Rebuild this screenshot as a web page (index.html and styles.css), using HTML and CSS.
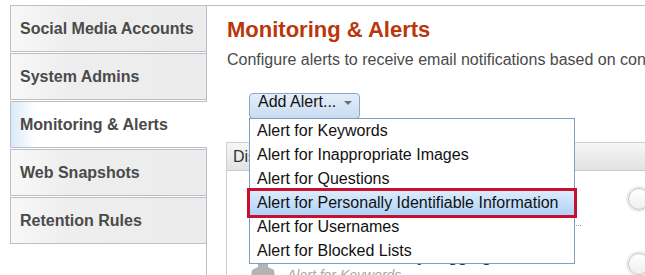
FILE: index.html
```html
<!DOCTYPE html>
<html lang="en">
<head>
<meta charset="utf-8">
<title>Monitoring &amp; Alerts</title>
<link rel="stylesheet" href="styles.css">
</head>
<body>
<div class="page">
  <nav class="nav">
    <div class="tab">Social Media Accounts</div>
    <div class="tab">System Admins</div>
    <div class="tab tab-active">Monitoring &amp; Alerts</div>
    <div class="tab">Web Snapshots</div>
    <div class="tab">Retention Rules</div>
  </nav>
  <main class="content">
    <h1 class="title">Monitoring &amp; Alerts</h1>
    <p class="desc">Configure alerts to receive email notifications based on content posted by students.</p>
    <div class="add-wrap">
      <button class="add-btn" type="button"><span>Add Alert...</span><span class="caret"></span></button>
      <ul class="menu">
        <li class="menu-item">Alert for Keywords</li>
        <li class="menu-item">Alert for Inappropriate Images</li>
        <li class="menu-item">Alert for Questions</li>
        <li class="menu-item menu-item-active">Alert for Personally Identifiable Information</li>
        <li class="menu-item">Alert for Usernames</li>
        <li class="menu-item">Alert for Blocked Lists</li>
      </ul>
    </div>
    <section class="panel">
      <div class="panel-head">Display Name</div>
      <div class="row">
        <div class="row-main">
          <svg class="user-icon" width="24" height="32" viewBox="0 0 24 32"><circle cx="12" cy="9" r="7" fill="#b3b3b3"/><rect x="7" y="14" width="10" height="9" fill="#b3b3b3"/><path d="M7 22 L17 22 L23 25 L24 32 L0 32 L1 25 Z" fill="#b3b3b3"/></svg>
          <div class="row-text">
            <div class="row-title">Main Word Rule</div>
            <div class="row-sub">Alert for Images</div>
          </div>
        </div>
        <span class="knob"></span>
      </div>
      <div class="row row-tall">
        <div class="row-main">
          <svg class="user-icon" width="24" height="32" viewBox="0 0 24 32"><circle cx="12" cy="9" r="7" fill="#b3b3b3"/><rect x="7" y="14" width="10" height="9" fill="#b3b3b3"/><path d="M7 22 L17 22 L23 25 L24 32 L0 32 L1 25 Z" fill="#b3b3b3"/></svg>
          <div class="row-text">
            <div class="row-title">Main Alert Rule by Tagging</div>
            <div class="row-sub">Alert for Keywords</div>
          </div>
        </div>
        <span class="knob"></span>
      </div>
    </section>
  </main>
</div>
</body>
</html>
```

FILE: styles.css
```css
html, body {
  margin: 0;
  padding: 0;
  background: #ffffff;
  overflow: hidden;
}

body {
  font-family: "Liberation Sans", Arial, sans-serif;
  color: #333333;
}

.page {
  display: flex;
  padding: 5px 0 0 10px;
  height: 270px;
}

.nav {
  width: 196px;
  flex: none;
  display: flex;
  flex-direction: column;
}

.tab {
  box-sizing: border-box;
  height: 47px;
  margin-bottom: 1px;
  border: 1px solid #bcbfc8;
  border-right: none;
  background: linear-gradient(to right, #f8f8f8, #eeeeee 30%, #ececec);
  display: flex;
  align-items: center;
  padding-left: 9px;
  font-size: 16px;
  font-weight: bold;
  color: #4a4a4a;
  white-space: nowrap;
}

.tab-active {
  position: relative;
  margin-right: -1px;
  background: linear-gradient(to right, #dbe9f8, #ffffff 24px);
}

.content {
  flex: 1;
  min-width: 0;
  border-top: 1px solid #bcbfc8;
  border-left: 1px solid #bcbfc8;
  padding-left: 20px;
}

.title {
  margin: 11px 0 0;
  font-size: 22px;
  line-height: 26px;
  font-weight: bold;
  color: #b9370b;
}

.desc {
  margin: 8px 0 0;
  font-size: 16px;
  line-height: 18px;
  color: #4a4a4a;
  white-space: nowrap;
}

.add-wrap {
  position: relative;
  margin: 24px 0 0 22px;
  height: 26px;
}

.add-btn {
  box-sizing: border-box;
  height: 26px;
  display: inline-flex;
  align-items: flex-start;
  padding: 0 7px 0 8px;
  border: 1px solid #8ba7c7;
  border-radius: 4px;
  background: linear-gradient(#e4eefa, #c9dcf1);
  font-family: inherit;
  font-size: 16px;
  line-height: 16px;
  color: #111111;
}

.caret {
  width: 0;
  height: 0;
  margin: 7px 0 0 8px;
  border-left: 4px solid transparent;
  border-right: 4px solid transparent;
  border-top: 4px solid #6b6f75;
}

.menu {
  position: absolute;
  z-index: 2;
  top: 25px;
  left: 0;
  box-sizing: border-box;
  width: 326px;
  margin: 0;
  padding: 0;
  list-style: none;
  border: 1px solid #7f9ec2;
  background: #ffffff;
}

.menu-item {
  padding: 0 7px;
  font-size: 16px;
  line-height: 24px;
  color: #111111;
  white-space: nowrap;
}

.menu-item-active {
  background: linear-gradient(#dcecfd, #aed2f7);
  outline: 3px solid #c8102e;
}

.panel {
  margin: 23px -60px 0 -1px;
  border-top: 1px solid #cfcfcf;
  border-left: 1px solid #cfcfcf;
}

.panel-head {
  height: 27px;
  line-height: 27px;
  padding-left: 6px;
  border-bottom: 1px solid #cbcbcb;
  background: linear-gradient(#f6f6f6, #e2e2e2);
  font-size: 16px;
  color: #333333;
}

.row {
  display: flex;
  align-items: center;
  padding-left: 23px;
}

.row-main {
  box-sizing: border-box;
  width: 331px;
  height: 55px;
  display: flex;
  align-items: flex-start;
  border-bottom: 1px dotted #9aa4ae;
}

.row-tall .row-main {
  height: 76px;
  border-bottom: none;
}

.user-icon {
  flex: none;
  margin: 12px 12px 0 1px;
}

.row-tall .user-icon {
  margin-top: 19px;
}

.row-text {
  padding-top: 6px;
}

.row-tall .row-text {
  padding-top: 21px;
}

.row-title {
  font-size: 16px;
  line-height: 20px;
  font-weight: bold;
  color: #333333;
  white-space: nowrap;
}

.row-sub {
  font-size: 14px;
  line-height: 16px;
  font-style: italic;
  color: #a8a8a8;
  white-space: nowrap;
}

.knob {
  flex: none;
  box-sizing: border-box;
  width: 22px;
  height: 22px;
  margin-left: 47px;
  border-radius: 50%;
  border: 1px solid #c4c4c4;
  background: linear-gradient(#ffffff, #efefef);
  box-shadow: 0 0 0 2px #ededed;
}
```
